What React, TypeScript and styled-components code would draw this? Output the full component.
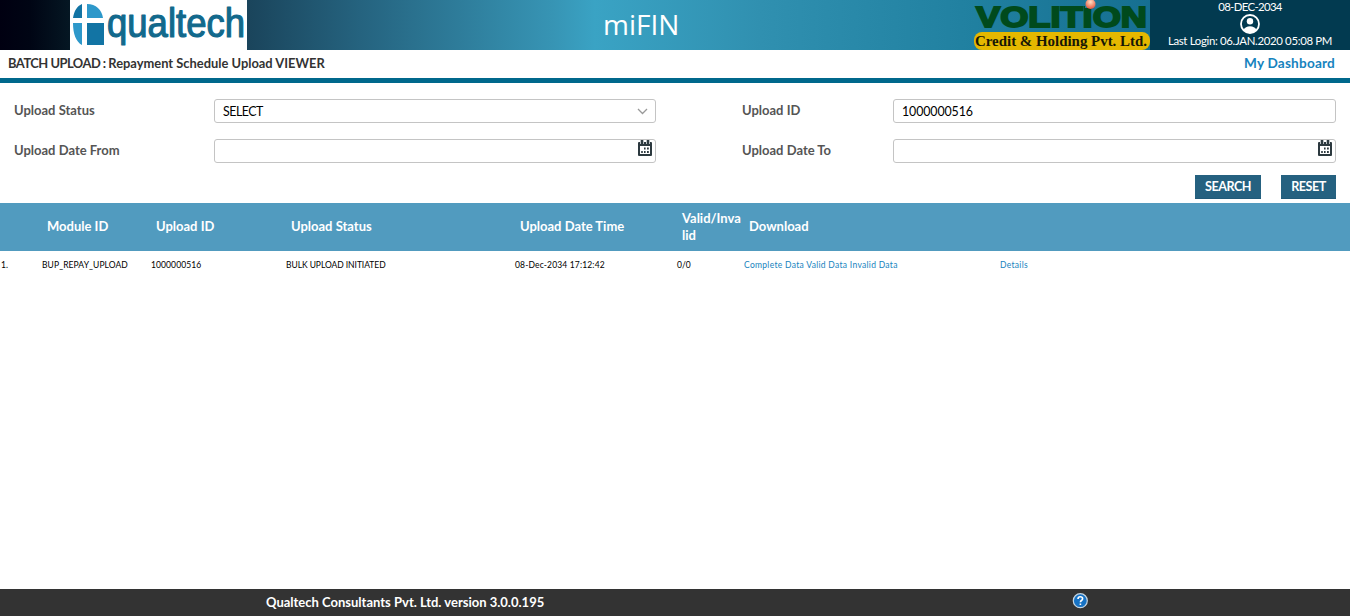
import React from "react";
import styled, { createGlobalStyle } from "styled-components";

const GlobalStyle = createGlobalStyle`
  * { box-sizing: border-box; }
  body { margin: 0; background: #fff; font-family: Lato, "Open Sans", sans-serif; overflow: hidden; }
`;

const Page = styled.div`
  display: flex;
  flex-direction: column;
  width: 1350px;
  height: 616px;
`;

const Header = styled.header`
  display: flex;
  height: 50px;
  flex: none;
  background: linear-gradient(90deg, #000011 0, #000514 30px, #051723 70px, #1a445b 247px, #25637f 360px, #3795b5 555px, #3aa3c4 595px, #3090b0 760px, #2080a0 975px, #166f91 1150px);
`;

const BrandLogo = styled.svg`
  display: block;
  margin-left: 70px;
  background: #fff;
  flex: none;
`;

const Title = styled.h1`
  margin: 0;
  width: 726px;
  padding-left: 356px;
  font: 400 28px/48px "Open Sans", sans-serif;
  color: #fff;
`;

const ClientLogo = styled.svg`
  display: block;
  flex: none;
`;

const UserPanel = styled.div`
  width: 200px;
  flex: none;
  display: flex;
  flex-direction: column;
  align-items: center;
  background: #023a50;
  color: #fff;
  font-size: 11.4px;
  letter-spacing: -0.33px;
  line-height: 14px;
`;

const LoginLine = styled.span<{ $tight?: boolean }>`
  white-space: nowrap;
  letter-spacing: ${(p) => (p.$tight ? -0.65 : -0.33)}px;
`;

const TitleBar = styled.div`
  display: flex;
  justify-content: space-between;
  flex: none;
  height: 33px;
  padding: 0 15px 5px 8px;
  border-bottom: 5px solid #00688c;
  font-size: 12.9px;
  font-weight: 700;
  line-height: 27px;
  color: #333;
`;

const ModuleName = styled.span`
  letter-spacing: -0.5px;
`;

const DashboardLink = styled.a`
  font-size: 13.6px;
  letter-spacing: 0.2px;
  color: #1683be;
`;

const Filters = styled.form`
  display: grid;
  grid-template-columns: 200px 442px 86px 151px 443px;
  grid-template-rows: 24px 24px;
  row-gap: 16px;
  padding: 16px 14px 0;
  flex: none;
`;

const Label = styled.label<{ $second?: boolean }>`
  grid-column: ${(p) => (p.$second ? 4 : 1)};
  font-size: 13px;
  font-weight: 700;
  line-height: 22px;
  color: #555;
`;

const Field = styled.div<{ $icon?: boolean; $spacing?: number }>`
  display: flex;
  justify-content: space-between;
  align-items: ${(p) => (p.$icon ? "flex-start" : "center")};
  height: 24px;
  border: 1px solid #c4c4c4;
  border-radius: 3px;
  padding: ${(p) => (p.$icon ? "0 3px" : "1px 7px 0 8px")};
  font-size: 12.4px;
  letter-spacing: ${(p) => p.$spacing ?? 0}px;
  color: #000;
`;

const Actions = styled.div`
  display: flex;
  justify-content: flex-end;
  gap: 20px;
  flex: none;
  padding: 12px 14px 4px;
`;

const Button = styled.button<{ $width: number }>`
  width: ${(p) => p.$width}px;
  height: 24px;
  padding: 0;
  border: 0;
  border-bottom: 1px solid #205a79;
  background: #256180;
  color: #fff;
  font: 700 12.6px/23px Lato, sans-serif;
  letter-spacing: -0.5px;
`;

const columns = "42px 109px 135px 229px 162px 67px 256px 350px";

const TableHead = styled.div`
  display: grid;
  grid-template-columns: ${columns};
  align-items: center;
  height: 48px;
  flex: none;
  padding-bottom: 1px;
  background: #519bbf;
  color: #fff;
  font-size: 13px;
  font-weight: 700;
  line-height: 17px;
`;

const HeadCell = styled.div`
  padding-left: 5px;
  word-break: break-all;
`;

const TableRow = styled.div`
  display: grid;
  grid-template-columns: ${columns};
  height: 28px;
  flex: none;
  color: #000;
  font-size: 8.5px;
  line-height: 28px;
  white-space: nowrap;
`;

const Cell = styled.div<{ $spacing?: number }>`
  letter-spacing: ${(p) => p.$spacing ?? 0}px;
  &:first-child { padding-left: 1px; }
`;

const TableLink = styled.a`
  color: #1683be;
`;

const Footer = styled.footer`
  display: flex;
  align-items: flex-start;
  justify-content: space-between;
  margin-top: auto;
  height: 27px;
  flex: none;
  padding: 0 262px 0 266px;
  background: #333;
  color: #fff;
  font-size: 13px;
  font-weight: 700;
  line-height: 27px;
`;

const HelpIcon = styled.svg`
  margin-top: 4px;
`;

const Calendar = () => (
  <svg width="14" height="16" viewBox="0 0 14 16">
    <rect x="0" y="2" width="14" height="14" rx="1" fill="#2c393f" />
    <path d="M2 0h4v4H2zM8 0h4v4H8z" fill="#b9bfc2" />
    <path d="M3 0h2v4H3zM9 0h2v4H9z" fill="#2c393f" />
    <rect x="2" y="6" width="10" height="8" fill="#fff" />
    <path d="M6 7.5h1.6v2H6zM9 7.5h1.8v2H9zM3.2 11h1.6v2H3.2zM6 11h1.6v2H6zM9 11h1.8v2H9z" fill="#2c393f" />
  </svg>
);

export default function App() {
  return (
    <>
      <GlobalStyle />
      <Page>
        <Header>
          <BrandLogo width="177" height="50" viewBox="0 0 177 50">
            <path d="M12 4v14H3C4 11 7 6 12 4zM17 23h17v22H17z" fill="#1274a4" />
            <path d="M17 4c9 0 15 6 16 14H17zM3 23h9v22C6 42 3 34 3 23z" fill="#2d98ca" />
            <text x="37" y="36.5" textLength="138" lengthAdjust="spacingAndGlyphs" fontFamily="Liberation Sans" fontSize="40" fill="#12698c" stroke="#12698c" strokeWidth="1.2" strokeLinejoin="round">qualtech</text>
          </BrandLogo>
          <Title>miFIN</Title>
          <ClientLogo width="177" height="50" viewBox="0 0 177 50">
            <defs>
              <radialGradient id="sun" cx=".5" cy=".3" r=".7">
                <stop offset="0" stopColor="#ffe0c5" />
                <stop offset="1" stopColor="#e5543c" />
              </radialGradient>
            </defs>
            <text x="3" y="26.7" textLength="171" lengthAdjust="spacingAndGlyphs" fontFamily="Liberation Sans" fontWeight="700" fontSize="29.4" fill="#004a1c" stroke="#004a1c" strokeWidth="1.9">VOLITION</text>
            <rect x="112" y="0" width="11" height="8" fill="#1d7b9c" />
            <circle cx="117.5" cy="4" r="5" fill="url(#sun)" />
            <rect x="1" y="32" width="176" height="18" rx="8" fill="#e5b800" />
            <text x="2" y="46" textLength="172" lengthAdjust="spacingAndGlyphs" fontFamily="Liberation Serif" fontWeight="700" fontSize="15" fill="#171706">Credit &amp; Holding Pvt. Ltd.</text>
          </ClientLogo>
          <UserPanel>
            <LoginLine $tight>08-DEC-2034</LoginLine>
            <svg width="20" height="20" viewBox="0 0 20 20">
              <circle cx="10" cy="10" r="9" fill="none" stroke="#fff" strokeWidth="1.8" />
              <circle cx="10" cy="7.2" r="3.2" fill="#fff" />
              <path d="M3.5 16c2-5 11-5 13 0l-3 2.5h-7z" fill="#fff" />
            </svg>
            <LoginLine>Last Login: 06.JAN.2020 05:08 PM</LoginLine>
          </UserPanel>
        </Header>
        <TitleBar>
          <span><ModuleName>BATCH UPLOAD : </ModuleName>Repayment Schedule Upload VIEWER</span>
          <DashboardLink>My Dashboard</DashboardLink>
        </TitleBar>
        <Filters>
          <Label>Upload Status</Label>
          <Field $spacing={-0.5}>
            SELECT
            <svg width="11" height="7" viewBox="0 0 11 7">
              <path d="M1 1l4.5 4.5L10 1" fill="none" stroke="#999" strokeWidth="1.3" />
            </svg>
          </Field>
          <Label $second>Upload ID</Label>
          <Field $spacing={-0.1}>1000000516</Field>
          <Label>Upload Date From</Label>
          <Field $icon><span /><Calendar /></Field>
          <Label $second>Upload Date To</Label>
          <Field $icon><span /><Calendar /></Field>
        </Filters>
        <Actions>
          <Button type="button" $width={66}>SEARCH</Button>
          <Button type="button" $width={55}>RESET</Button>
        </Actions>
        <TableHead>
          <HeadCell />
          <HeadCell>Module ID</HeadCell>
          <HeadCell>Upload ID</HeadCell>
          <HeadCell>Upload Status</HeadCell>
          <HeadCell>Upload Date Time</HeadCell>
          <HeadCell>Valid/Inva<br />lid</HeadCell>
          <HeadCell>Download</HeadCell>
          <HeadCell />
        </TableHead>
        <TableRow>
          <Cell>1.</Cell>
          <Cell $spacing={0.1}>BUP_REPAY_UPLOAD</Cell>
          <Cell $spacing={0.1}>1000000516</Cell>
          <Cell $spacing={-0.05}>BULK UPLOAD INITIATED</Cell>
          <Cell $spacing={0.15}>08-Dec-2034 17:12:42</Cell>
          <Cell>0/0</Cell>
          <Cell $spacing={0.3}><TableLink>Complete Data</TableLink> <TableLink>Valid Data</TableLink> <TableLink>Invalid Data</TableLink></Cell>
          <Cell $spacing={0.3}><TableLink>Details</TableLink></Cell>
        </TableRow>
        <Footer>
          <span>Qualtech Consultants Pvt. Ltd. version 3.0.0.195</span>
          <HelpIcon width="16" height="16" viewBox="0 0 16 16">
            <circle cx="8.3" cy="7.7" r="7" fill="#1672c4" stroke="#c5d5e2" strokeWidth="1.2" />
            <path d="M6 6c0-3 4.6-2.8 4.6-.2 0 1.8-2.2 1.6-2.2 3.4M8.4 10.6v1.5" fill="none" stroke="#fff" strokeWidth="1.6" />
          </HelpIcon>
        </Footer>
      </Page>
    </>
  );
}
